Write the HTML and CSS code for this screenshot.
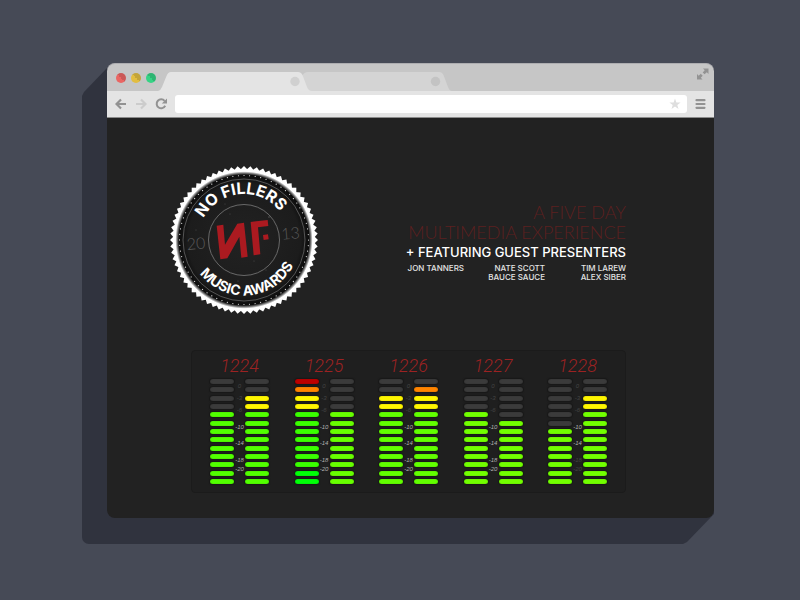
FILE: index.html
```html
<!DOCTYPE html>
<html lang="en">
<head>
<meta charset="utf-8">
<title>No Fillers Music Awards</title>
<link rel="stylesheet" href="styles.css">
</head>
<body>
<div class="window">
  <div class="titlebar">
    <div class="lights">
      <button class="light light-close" aria-label="Close"></button>
      <button class="light light-min" aria-label="Minimize"></button>
      <button class="light light-max" aria-label="Maximize"></button>
    </div>
    <svg class="tabs" width="294" height="19" viewBox="0 0 294 19" aria-hidden="true">
      <path fill="#d4d4d4" d="M144 19V4Q146 0 150 0H281Q284 0 285.500 3L290 15Q291.500 19 294 19Z"/>
      <path fill="#e4e4e4" d="M0 19Q3 18 4 15L8.500 4Q10 0 13 0H140Q143 0 144.500 3L149 15Q150.500 19 154 19Z"/>
      <circle cx="137" cy="9.500" r="4.700" fill="#d0d0d0"/>
      <circle cx="277.500" cy="9.500" r="4.700" fill="#c3c3c3"/>
    </svg>
    <button class="expand" aria-label="Full screen">
      <svg width="12" height="12" viewBox="0 0 12 12"><path fill="#939393" d="M6 .5H11.500V6L9.800 4.300L7.600 6.300L5.700 4.400L7.700 2.200ZM0 11.500V6L1.700 7.700L3.800 5.800L5.700 7.700L3.800 9.800L5.500 11.500Z"/></svg>
    </button>
  </div>
  <div class="toolbar">
    <button aria-label="Back"><svg width="12" height="12" viewBox="0 0 12 12"><path d="M11 6H2M6 1.500L1.500 6L6 10.500" fill="none" stroke="#929292" stroke-width="2.200"/></svg></button>
    <button aria-label="Forward"><svg width="12" height="12" viewBox="0 0 12 12"><path d="M1 6H10M6 1.500L10.500 6L6 10.500" fill="none" stroke="#cccccc" stroke-width="2.200"/></svg></button>
    <button aria-label="Reload"><svg width="12" height="12" viewBox="0 0 12 12"><path d="M9.600 2.800A4.500 4.500 0 1 0 10.200 7.800" fill="none" stroke="#929292" stroke-width="2"/><path d="M12 .5V5.500H6.800Z" fill="#929292"/></svg></button>
    <div class="address">
      <input type="text" aria-label="Address">
      <button class="star" aria-label="Bookmark"><svg width="12" height="12" viewBox="0 0 12 12"><path fill="#dedede" d="M6 .5L7.400 4.400L11.600 4.500L8.300 7L9.500 11L6 8.600L2.500 11L3.700 7L.4 4.500L4.600 4.400Z"/></svg></button>
    </div>
    <button aria-label="Menu"><svg width="12" height="12" viewBox="0 0 12 12"><path d="M1.500 2.200H9.500M1.500 6H9.500M1.500 9.800H9.500" stroke="#929292" stroke-width="2.200" stroke-linecap="round"/></svg></button>
  </div>
  <main class="page">
    <section class="hero">
      <svg class="badge" width="148" height="148" viewBox="0 0 148 148" role="img" aria-label="No Fillers Music Awards 2013">
        <defs>
          <radialGradient id="disc" gradientUnits="userSpaceOnUse" cx="74" cy="74" r="70">
            <stop offset="0" stop-color="#222"/><stop offset=".8" stop-color="#1c1c1c"/><stop offset=".93" stop-color="#0c0c0c"/><stop offset=".955" stop-color="#777"/><stop offset=".98" stop-color="#fff"/>
          </radialGradient>
          <rect id="t1" x="21.700" y="21.700" width="104.600" height="104.600"/>
          <g id="t3"><use href="#t1"/><use href="#t1" transform="rotate(5 74 74)"/><use href="#t1" transform="rotate(10 74 74)"/></g>
          <path id="top" d="M28 74A46 46 0 0 1 120 74"/>
          <path id="bottom" d="M18.500 74A55.500 55.500 0 0 0 129.500 74"/>
        </defs>
        <g fill="#fff">
          <use href="#t3"/><use href="#t3" transform="rotate(15 74 74)"/><use href="#t3" transform="rotate(30 74 74)"/>
          <use href="#t3" transform="rotate(45 74 74)"/><use href="#t3" transform="rotate(60 74 74)"/><use href="#t3" transform="rotate(75 74 74)"/>
        </g>
        <circle cx="74" cy="74" r="70" fill="url(#disc)"/>
        <circle cx="74" cy="74" r="64.500" fill="none" stroke="#ddd" stroke-width="1.200" stroke-linecap="round" pathLength="72" stroke-dasharray=".01 .99"/>
        <circle cx="74" cy="74" r="61" fill="none" stroke="#666" stroke-width=".8"/>
        <circle cx="74" cy="74" r="35.500" fill="none" stroke="#707070" stroke-width=".9"/>
        <g transform="rotate(-5 74 74)" text-anchor="middle">
          <text class="ring-text ring-top"><textPath href="#top" startOffset="50%">NO FILLERS</textPath></text>
          <text class="ring-text ring-bottom"><textPath href="#bottom" startOffset="50%">MUSIC AWARDS</textPath></text>
          <text class="year" x="26" y="79">20</text>
          <text class="year" x="121" y="77">13</text>
        </g>
        <g fill="#ab1a20" transform="translate(-10 -6) scale(.3333)">
          <path d="M170 197L190 194L195 254L232 191L252 188L263 290L244 293L238 230L202 295L181 298Z"/>
          <path d="M272 186L323 180L325 198L294 202L301 283L281 286Z"/>
          <path d="M309 225L324 223L326 238L311 240Z"/>
        </g>
        <g fill="#555"><circle cx="26" cy="64" r=".5"/><circle cx="55" cy="38" r=".5"/><circle cx="99" cy="51" r=".8"/><circle cx="84" cy="95" r=".5"/><circle cx="68" cy="115" r=".5"/><circle cx="60" cy="48" r=".5"/><circle cx="96" cy="104" r=".5"/></g>
      </svg>
      <div class="intro">
        <h1>A FIVE DAY<br>MULTIMEDIA EXPERIENCE</h1>
        <h2>+ FEATURING GUEST PRESENTERS</h2>
        <div class="names">
          <p>JON TANNERS</p>
          <p>NATE SCOTT<br>BAUCE SAUCE</p>
          <p>TIM LAREW<br>ALEX SIBER</p>
        </div>
      </div>
    </section>
    <section class="panel" id="panel"></section>
  </main>
</div>
<script src="meters.js"></script>
</body>
</html>
```
FILE: styles.css
```css
* { box-sizing: border-box; }

body {
  margin: 0;
  min-height: 100vh;
  padding: 63px 86px 82px 107px;
  background: #464a56;
  font-family: Inter, "Liberation Sans", sans-serif;
  color: #fff;
}

h1, h2, p { margin: 0; }

button {
  display: flex;
  padding: 0;
  border: 0;
  background: none;
}

.window {
  position: relative;
  isolation: isolate;
}

/* long cast shadow, down and to the left */
.window::before {
  content: "";
  position: absolute;
  z-index: -1;
  inset: 5px 0 -26px -25px;
  background: #30333e;
  border-radius: 0 0 0 7px;
  clip-path: polygon(25px 0, 100% 0, 100% calc(100% - 30px), calc(100% - 27px) calc(100% - 2px), calc(100% - 31px) 100%, 0 100%, 0 28px, 2px 24px);
}

.titlebar {
  display: flex;
  align-items: flex-end;
  height: 28px;
  padding-left: 9px;
  background: #c6c6c6;
  border-top: 1px solid #adadb0;
  border-radius: 8px 8px 0 0;
}

.lights {
  display: flex;
  gap: 5px;
  padding-bottom: 8px;
}

.light {
  width: 10px;
  height: 10px;
  border-radius: 50%;
}

.light-close { background: linear-gradient(45deg, #ea6562 50%, #ca5856 50%); }
.light-min { background: linear-gradient(45deg, #e2bd40 50%, #c3a43a 50%); }
.light-max { background: linear-gradient(45deg, #35d384 50%, #2eb572 50%); }

.tabs { margin-left: 2px; }

.expand {
  margin-left: auto;
  padding: 0 5px 11px 0;
}

.toolbar {
  display: flex;
  align-items: center;
  gap: 8px;
  height: 27px;
  padding: 0 7px 0 8px;
  background: #e4e4e4;
  border-bottom: 1px solid #8b8b8b;
}

.address {
  position: relative;
  flex: 1;
  height: 18px;
}

.address input {
  display: block;
  width: 100%;
  height: 100%;
  padding: 0 24px 0 6px;
  border: 0;
  border-radius: 3px;
  background: #fff;
  font: 11px Inter, sans-serif;
}

.star {
  position: absolute;
  top: 3px;
  right: 6px;
}

.page {
  padding: 48px 88px 25px 63px;
  background: #222;
  border-radius: 0 0 8px 8px;
}

.hero {
  display: flex;
  align-items: center;
  justify-content: space-between;
}

.badge { flex: none; }

.ring-text {
  font-family: Inter, sans-serif;
  font-weight: 700;
  fill: #fff;
}

.ring-top { font-size: 16px; }
.ring-bottom { font-size: 14px; }

.year {
  font: 300 16px Lato, sans-serif;
  fill: #5a5a5a;
}

.intro {
  padding-top: 3px;
  text-align: right;
  white-space: nowrap;
}

h1 {
  font: 300 18px/20px Lato, sans-serif;
  color: #5c2020;
}

h2 {
  font-size: 13px;
  font-weight: 500;
  line-height: 20px;
}

.names {
  display: grid;
  grid-template-columns: auto 81px 81px;
  padding-top: 2px;
  font-size: 8px;
  font-weight: 500;
  line-height: 9px;
  color: #e4e4e4;
}

.panel {
  display: flex;
  justify-content: space-between;
  margin: 36px 0 0 21px;
  padding: 5px 18px 8px;
  border: 1px solid #1b1b1b;
  border-radius: 4px;
  background: #1f1f1f;
}

.meter { width: 59px; }

.meter h3 {
  margin: 0 0 4px;
  font: italic 300 18px/19px Roboto, sans-serif;
  text-align: center;
  color: #9c2222;
}

.channels {
  display: grid;
  grid-template-columns: 24px 11px 24px;
  height: 105px;
}

.channel {
  display: flex;
  flex-direction: column;
  justify-content: space-between;
}

.bar {
  height: 5px;
  border-radius: 3px;
  background: var(--lit);
  box-shadow: 0 0 1px 1px #181818, inset 0 0 1px rgba(0, 0, 0, .5);
}

.bar.off { background: #3b3b3b; }
.bar.red { background: #bd0000; }
.bar.orange { background: #ff8400; }
.bar.yellow { background: #fff600; }
.bar.pure { background: #00ff08; }

.scale {
  display: grid;
  grid-template-rows: 10px 12px 12px 17px 16px 17px 9px;
  align-items: end;
  justify-items: center;
  font: italic 6px/6px "Liberation Sans", sans-serif;
  color: #b0b0b0;
}

.scale .dim { color: #444; }
```
FILE: meters.js
```js
const scale = [0, -3, -6, -10, -14, -18, -20];

// Each channel lists the top segments; the remaining ones are lit green.
const off = n => Array(n).fill("off");
const hot = ["yellow", "yellow"];
const meters = [
  { day: 1224, lit: ["#52ff00", "#52ff00"], top: [off(4), [...off(2), ...hot]] },
  { day: 1225, lit: ["#3aff00", "#68ff00"], top: [["red", "orange", ...hot], off(4)], pure: true },
  { day: 1226, lit: ["#62ff00", "#62ff00"], top: [[...off(2), ...hot], ["off", "orange", ...hot]] },
  { day: 1227, lit: ["#72ff00", "#72ff00"], top: [off(4), off(5)] },
  { day: 1228, lit: ["#72ff00", "#72ff00"], top: [off(6), [...off(2), ...hot]], dimLow: true }
];

function channel(m, i) {
  let bars = "";
  for (let n = 0; n < 13; n++) {
    const kind = m.top[i][n] || (m.pure && i === 0 && n > 10 ? "pure" : "");
    bars += `<span class="bar ${kind}"></span>`;
  }
  return `<div class="channel" style="--lit:${m.lit[i]}">${bars}</div>`;
}

document.getElementById("panel").innerHTML = meters.map(m => {
  const labels = scale.map((v, n) =>
    `<span class="${n < 3 || (m.dimLow && n > 4) ? "dim" : ""}">${v}</span>`).join("");
  return `<article class="meter"><h3>${m.day}</h3><div class="channels">${channel(m, 0)}<div class="scale">${labels}</div>${channel(m, 1)}</div></article>`;
}).join("");
```
